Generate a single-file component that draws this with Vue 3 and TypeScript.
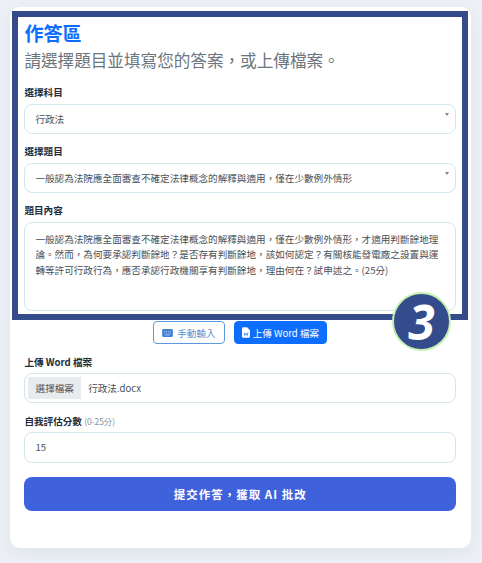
<template>
  <div class="page">
    <section class="card">
      <div class="highlight" aria-hidden="true"></div>
      <div class="step-badge" aria-hidden="true">3</div>

      <h1 class="title">作答區</h1>
      <p class="subtitle">請選擇題目並填寫您的答案&#xFF0C;或上傳檔案。</p>

      <label class="field-label first">選擇科目</label>
      <div class="select-wrap">
        <select v-model="subject" class="control">
          <option>行政法</option>
        </select>
        <span class="arrow"></span>
      </div>

      <label class="field-label">選擇題目</label>
      <div class="select-wrap">
        <select v-model="question" class="control">
          <option>{{ questionShort }}</option>
        </select>
        <span class="arrow"></span>
      </div>

      <label class="field-label">題目內容</label>
      <textarea v-model="questionBody" class="control body" readonly></textarea>

      <div class="mode-row">
        <button type="button" class="mode-btn">
          <svg class="icon" width="11" height="8" viewBox="0 0 16 12">
            <rect width="16" height="12" rx="2" fill="#3f7fd8" />
            <path d="M3 3.5h1.5M6 3.5h1.5M9 3.5h1.5M12 3.5h1M3 6h1.5M6 6h1.5M9 6h1.5M12 6h1M4 8.8h8" stroke="#cfe0f7" stroke-width="1" />
          </svg>
          手動輸入
        </button>
        <button type="button" class="mode-btn active">
          <svg class="icon" width="8" height="11" viewBox="0 0 12 16">
            <path d="M2 0h5.5L12 4.5V14a2 2 0 0 1-2 2H2a2 2 0 0 1-2-2V2a2 2 0 0 1 2-2z" fill="#fff" />
            <path d="M3.2 8.2l1 4.2 1.8-3 1.8 3 1-4.2" fill="none" stroke="#0d6efd" stroke-width="1.1" />
          </svg>
          上傳 Word 檔案
        </button>
      </div>

      <label class="field-label upload">上傳 Word 檔案</label>
      <div class="file-box">
        <span class="file-btn">選擇檔案</span>
        <span class="file-name">行政法.docx</span>
      </div>

      <label class="field-label score">自我評估分數 <small>(0-25分)</small></label>
      <input v-model="score" class="control score-input" type="text" />

      <button type="button" class="submit">提交作答&#xFF0C;獲取 AI 批改</button>
    </section>
  </div>
</template>

<script setup lang="ts">
import { ref } from "vue";

const questionShort = "一般認為法院應全面審查不確定法律概念的解釋與適用\uFF0C僅在少數例外情形";
const subject = ref("行政法");
const question = ref(questionShort);
const questionBody = ref(
  questionShort +
    "\uFF0C才適用判斷餘地理論。然而\uFF0C為何要承認判斷餘地\uFF1F是否存有判斷餘地\uFF0C該如何認定\uFF1F有關核能發電廠之設置與運轉等許可行政行為\uFF0C應否承認行政機關享有判斷餘地\uFF0C理由何在\uFF1F試申述之。(25分)"
);
const score = ref("15");
</script>

<style>
html,
body {
  margin: 0;
  background: #edf1f6;
}
</style>

<style scoped>
.page {
  box-sizing: border-box;
  width: 482px;
  height: 563px;
  padding: 7px 11px 15px 10px;
  overflow: hidden;
  font-family: "Noto Sans CJK TC", "Noto Sans", sans-serif;
  color: #212529;
}

.card {
  position: relative;
  box-sizing: border-box;
  height: 541px;
  padding: 14px 15px 0 14.4px;
  background: #fff;
  border-radius: 10px;
  box-shadow: 0 6px 18px rgba(60, 80, 120, 0.08);
}

.highlight {
  position: absolute;
  left: 2px;
  top: 4px;
  width: 444px;
  height: 297px;
  border: 6px solid #354c8c;
  pointer-events: none;
  z-index: 2;
}

.step-badge {
  position: absolute;
  left: 382px;
  top: 285px;
  width: 59px;
  height: 59px;
  box-sizing: border-box;
  display: flex;
  align-items: center;
  justify-content: center;
  border: 2px solid #c5efb0;
  border-radius: 50%;
  background: #354c8c;
  color: #fff;
  font-family: "Open Sans", sans-serif;
  font-size: 48px;
  font-style: italic;
  font-weight: 700;
  line-height: 1;
  z-index: 3;
}

.title {
  margin: 0;
  font-size: 19px;
  line-height: 23px;
  font-weight: 700;
  color: #0d6efd;
}

.subtitle {
  margin: 5px 0 0;
  font-size: 16.6px;
  line-height: 22px;
  color: #6c757d;
}

.field-label {
  display: block;
  margin: 10.5px 0 4.5px;
  font-size: 9.6px;
  line-height: 14px;
  font-weight: 700;
  color: #212d3a;
}

.field-label.first {
  margin-top: 14px;
}

.field-label.upload {
  margin: 10.7px 0 4px;
}

.field-label.score {
  margin: 11px 0 4.3px;
}

.field-label small {
  font-size: 8.4px;
  font-weight: 400;
  color: #8a929a;
}

.select-wrap {
  position: relative;
}

.control {
  display: block;
  box-sizing: border-box;
  width: 100%;
  height: 30px;
  padding: 0 10px;
  border: 1px solid #d6e4ec;
  border-radius: 8px;
  background: #fff;
  color: #495057;
  font-family: inherit;
  font-size: 9.6px;
  outline: none;
  appearance: none;
}

.arrow {
  position: absolute;
  right: 7px;
  top: 9.5px;
  border: 2px solid transparent;
  border-top: 3px solid #808890;
  border-bottom: 0;
}

.body {
  height: 89.5px;
  padding: 9px 10px;
  line-height: 15.7px;
  resize: none;
}

.mode-row {
  display: flex;
  justify-content: center;
  gap: 9px;
  margin-top: 10px;
}

.mode-btn {
  display: inline-flex;
  align-items: center;
  gap: 4px;
  box-sizing: border-box;
  height: 23px;
  padding: 0 8px;
  border: 1px solid #5a9ae0;
  border-radius: 4px;
  background: #fff;
  color: #5d8fd0;
  font-family: inherit;
  font-size: 9.6px;
}

.mode-btn.active {
  gap: 3px;
  padding: 0 7px;
  border-color: #0d6efd;
  background: #0d6efd;
  color: #fff;
}

.file-box {
  display: flex;
  align-items: center;
  box-sizing: border-box;
  height: 30.3px;
  padding: 3px;
  border: 1px solid #d6e4ec;
  border-radius: 8px;
  font-size: 9.6px;
  color: #495057;
}

.file-btn {
  display: flex;
  align-items: center;
  height: 100%;
  padding: 0 7.2px;
  background: #e9ecef;
}

.file-name {
  margin-left: 7px;
}

.score-input {
  height: 30.4px;
}

.submit {
  display: block;
  width: 100%;
  height: 33.7px;
  margin-top: 14.3px;
  border: 0;
  border-radius: 8px;
  background: #3f62dc;
  color: #fff;
  font-family: inherit;
  font-size: 11.5px;
  font-weight: 700;
  letter-spacing: 1px;
}
</style>
